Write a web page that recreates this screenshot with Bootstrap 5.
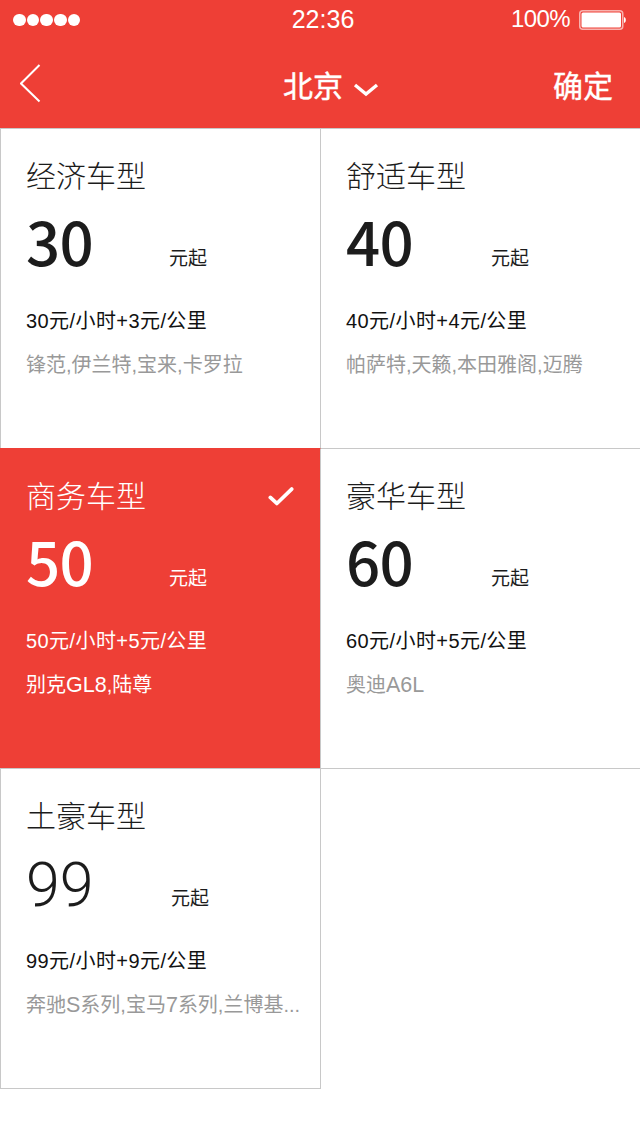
<!DOCTYPE html>
<html lang="zh"><head><meta charset="utf-8">
<link href="https://cdn.jsdelivr.net/npm/bootstrap@5.3.0/dist/css/bootstrap.min.css" rel="stylesheet">
<style>
html,body{background:#fff;margin:0}
body{font-family:"Liberation Sans","Noto Sans CJK SC",sans-serif;width:640px;height:1136px;overflow:hidden}
.topbar{background:#ee3f36;color:#fff;height:128px}
.statusrow{height:40px;padding:0 14px 0 13px;position:relative}
.dots{gap:1.2px;width:68px}
.dots i{display:block;width:12.5px;height:12.5px;border-radius:50%;background:#fff;flex:none}
.clock{position:absolute;left:6px;right:0;top:4px;text-align:center;font-size:25px;line-height:30px}
.pct{font-size:24px;line-height:30px;letter-spacing:-.6px;margin-right:9px;margin-top:-2px}
.navrow{height:88px;position:relative;padding:0 27px 0 20px}
.navcenter{position:absolute;left:283px;top:26px;font-size:30px;line-height:36px;font-weight:400;font-family:"Noto Sans CJK SC",sans-serif;-webkit-text-stroke:.4px #fff}
.confirm{font-size:30px;line-height:36px;font-weight:400;font-family:"Noto Sans CJK SC",sans-serif;-webkit-text-stroke:.4px #fff}
.navcenter svg{margin-top:10px;margin-left:10px}
.tile-grid{display:grid;grid-template-columns:321px 319px;grid-template-rows:320px 320px 321px}
.tile{padding:25px 0 0 26px;color:#1c1c1c;position:relative;border-top:1px solid #c8c8c8;min-width:0}
.tile-l{border-left:1px solid #c8c8c8;border-right:1px solid #c8c8c8;padding-left:25px}
.tile-r{padding-left:25px}
.tile-end{border-bottom:1px solid #c8c8c8}
.tile-on{background:#ee3f36;color:#fff;border-color:#ee3f36 #c8c8c8 #ee3f36 #ee3f36}
.tname{font-size:30px;line-height:40px;font-weight:300;font-family:"Noto Sans CJK SC",sans-serif;margin:0}
.pricerow{height:72px;margin-top:12px}
.pnum{font-family:"Noto Sans CJK SC",sans-serif;font-size:60px;line-height:68px;width:143px;letter-spacing:-.8px;font-weight:500}
.tile-r .pnum{width:145px}
.pnum-thin{font-family:Roboto,sans-serif;font-size:61px;line-height:72px;font-weight:300;letter-spacing:0;width:145px;padding-top:3px}
.pfrom{font-size:19px;line-height:24px;margin-top:39px;font-family:"Noto Sans CJK SC",sans-serif;font-weight:400}
.rate{font-size:20px;line-height:28px;margin-top:29px;letter-spacing:.42px;color:#111}
.tile-on .rate{color:#fff}
.cars{font-size:20px;line-height:28px;margin-top:16px;color:#999;white-space:nowrap}
.lat{font-size:21.5px}
.tile-on .cars{color:#fff}
.tick{position:absolute;right:26px;top:37px}
</style></head>
<body>
<div class="topbar">
  <div class="statusrow d-flex align-items-center justify-content-between">
    <div class="dots d-flex"><i></i><i></i><i></i><i></i><i></i></div>
    <div class="clock">22:36</div>
    <div class="d-flex align-items-center">
      <span class="pct">100%</span>
      <svg width="47" height="20" viewBox="0 0 47 20"><rect x=".75" y=".75" width="43" height="18.5" rx="3" fill="none" stroke="#fff" stroke-opacity=".6" stroke-width="1.5"/><rect x="2.5" y="2.5" width="39.500" height="15" rx="1.5" fill="#fff"/><path d="M45 7c1.300.3 1.800 1.500 1.800 3s-.5 2.700-1.800 3z" fill="#fff"/></svg>
    </div>
  </div>
  <div class="navrow d-flex align-items-center justify-content-between">
    <svg width="22" height="40" viewBox="0 0 22 40" fill="none" stroke="#fff" stroke-width="2"><path d="M19.500 1 1 19.500 19.500 37.500"/></svg>
    <div class="navcenter d-flex align-items-center">北京<svg width="26" height="16" viewBox="0 0 26 16" fill="none" stroke="#fff" stroke-width="3.400"><path d="M2 4l11 9 11-9"/></svg></div>
    <div class="confirm">确定</div>
  </div>
</div>
<div class="tile-grid">
  <div class="tile tile-l">
    <h2 class="tname">经济车型</h2>
    <div class="pricerow d-flex"><span class="pnum">30</span><span class="pfrom">元起</span></div>
    <div class="rate">30元/小时+3元/公里</div>
    <div class="cars">锋范,伊兰特,宝来,卡罗拉</div>
  </div>
  <div class="tile tile-r">
    <h2 class="tname">舒适车型</h2>
    <div class="pricerow d-flex"><span class="pnum">40</span><span class="pfrom">元起</span></div>
    <div class="rate">40元/小时+4元/公里</div>
    <div class="cars">帕萨特,天籁,本田雅阁,迈腾</div>
  </div>
  <div class="tile tile-l tile-on">
    <h2 class="tname">商务车型</h2>
    <svg class="tick" width="26" height="21" viewBox="0 0 28 22" fill="none" stroke="#fff" stroke-width="4" stroke-linecap="round" stroke-linejoin="round"><path d="M2.500 12l7 6.500L25.500 3"/></svg>
    <div class="pricerow d-flex"><span class="pnum">50</span><span class="pfrom">元起</span></div>
    <div class="rate">50元/小时+5元/公里</div>
    <div class="cars">别克<span class="lat">GL8</span>,陆尊</div>
  </div>
  <div class="tile tile-r">
    <h2 class="tname">豪华车型</h2>
    <div class="pricerow d-flex"><span class="pnum">60</span><span class="pfrom">元起</span></div>
    <div class="rate">60元/小时+5元/公里</div>
    <div class="cars">奥迪<span class="lat">A6L</span></div>
  </div>
  <div class="tile tile-l tile-end">
    <h2 class="tname">土豪车型</h2>
    <div class="pricerow d-flex"><span class="pnum pnum-thin">99</span><span class="pfrom">元起</span></div>
    <div class="rate">99元/小时+9元/公里</div>
    <div class="cars">奔驰<span class="lat">S</span>系列,宝马<span class="lat">7</span>系列,兰博基...</div>
  </div>
  <div class="tile"></div>
</div>
<script src="https://cdn.jsdelivr.net/npm/bootstrap@5.3.0/dist/js/bootstrap.bundle.min.js"></script>
</body></html>
